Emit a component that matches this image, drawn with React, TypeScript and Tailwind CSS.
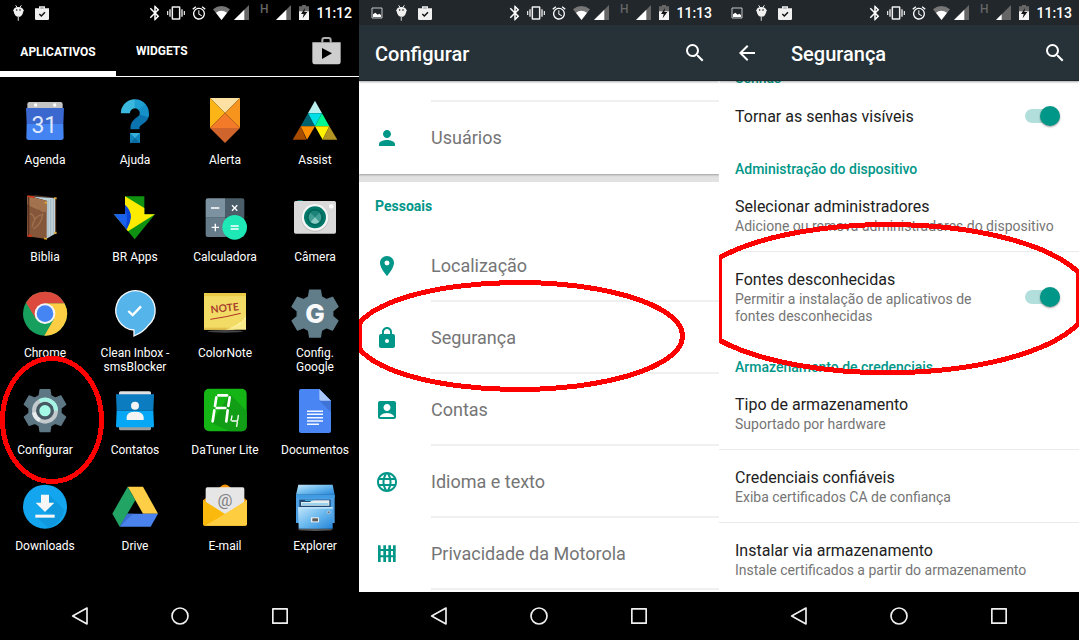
import React from 'react';
import {
  MdAccountBox,
  MdAlarm,
  MdArrowBack,
  MdBluetooth,
  MdLanguage,
  MdLocationOn,
  MdLock,
  MdPerson,
  MdSearch,
} from 'react-icons/md';

/* ---------- Status bar ---------- */

function PictureIcon() {
  return (
    <svg viewBox="0 0 36 36" className="size-3">
      <path d="M3 3h30v30H3z" fill="none" stroke="#c8c8c8" strokeWidth="3" />
      <path d="M6 30V22l7-5 7 6 5-3 5 4v6z" fill="#fff" />
    </svg>
  );
}

function BugIcon() {
  return (
    <svg viewBox="0 0 33 48" className="h-4 w-[11px]" fill="#f0f0f0">
      <path d="M8 1l5 7M25 1l-5 7" stroke="#f0f0f0" strokeWidth="3" />
      <path d="M1 16Q4 6 16 6T32 16L29 26Q26 35 16 36Q7 35 4 26Z" />
      <path d="M16 34v13" stroke="#a8a8a8" strokeWidth="4" />
      <circle cx="11" cy="15" r="2.4" fill="#111" />
      <circle cx="21" cy="15" r="2.4" fill="#111" />
    </svg>
  );
}

function BagIcon() {
  return (
    <svg viewBox="0 0 42 42" className="size-[14px]">
      <path d="M14 8V3h14v5" fill="none" stroke="#f0f0f0" strokeWidth="4" />
      <path d="M0 7h42v31q0 4-4 4H4q-4 0-4-4z" fill="#f0f0f0" />
      <path d="M13 24l6 6 11-11" fill="none" stroke="#111" strokeWidth="4.5" />
    </svg>
  );
}

function VibrateIcon() {
  return (
    <svg viewBox="0 0 54 42" className="h-[14px] w-[18px]" fill="none" stroke="#f0f0f0">
      <rect x="16" y="3" width="22" height="36" rx="1" strokeWidth="4.5" />
      <path d="M9 10v22M45 10v22" strokeWidth="4" />
      <path d="M2 15v12M52 15v12" strokeWidth="3.5" />
    </svg>
  );
}

function WifiIcon() {
  return (
    <svg viewBox="0 0 51 42" className="h-[14px] w-[17px]">
      <path d="M0 10Q25-10 51 10L25.500 42Z" fill="#777" />
      <path d="M9 20Q25 8 42 20L25.500 42Z" fill="#fff" />
    </svg>
  );
}

function SignalIcon({ fill }: { fill: number }) {
  return (
    <svg viewBox="0 0 45 45" className="size-[15px]">
      <path d="M45 0V45H0Z" fill="#666" />
      <path d={`M${fill} ${45 - fill}V45H0Z`} fill="#fff" />
    </svg>
  );
}

function BatteryIcon() {
  return (
    <svg viewBox="0 0 30 45" className="h-[15px] w-[10px]">
      <path d="M9 0h12v4h9v18H0V4h9z" fill="#666" />
      <path d="M0 19h30v26H0z" fill="#f4f4f4" />
      <path d="M18 9L6 27h8l-3 13 14-19h-9z" fill="#111" />
    </svg>
  );
}

function StatusBar({ time, picture, second, className }: { time: string; picture?: boolean; second: number; className: string }) {
  return (
    <div className={`flex h-[25px] shrink-0 items-center pr-[7px] pl-[6px] text-white ${className}`}>
      {picture && (
        <span className="flex w-6 justify-center">
          <PictureIcon />
        </span>
      )}
      <span className="flex w-6 justify-center">
        <BugIcon />
      </span>
      <span className="flex w-6 justify-center">
        <BagIcon />
      </span>
      <span className="ml-auto flex items-center">
        <MdBluetooth className="size-[18px]" />
        <span className="ml-[3px]">
          <VibrateIcon />
        </span>
        <MdAlarm className="ml-1.5 size-4" />
        <span className="ml-1.5">
          <WifiIcon />
        </span>
        <span className="ml-1">
          <SignalIcon fill={31} />
        </span>
        <span className="ml-[11px] pb-2 text-[12px] leading-3 font-medium text-[#666]">H</span>
        <span className="ml-2">
          <SignalIcon fill={second} />
        </span>
        <span className="ml-2">
          <BatteryIcon />
        </span>
        <span className="ml-[7px] text-[14px] leading-4 font-medium">{time}</span>
      </span>
    </div>
  );
}

/* ---------- Navigation bar ---------- */

function NavBar() {
  const shape = 'size-6 overflow-visible';
  return (
    <nav className="flex h-12 shrink-0 items-center justify-center bg-black">
      <button aria-label="Voltar" className="flex h-full w-[100px] items-center justify-center">
        <svg viewBox="0 0 72 72" className={shape} fill="none" stroke="#f0f0f0" strokeWidth="5" strokeLinejoin="round">
          <path d="M14 36L57 12V60Z" />
        </svg>
      </button>
      <button aria-label="Início" className="flex h-full w-[100px] items-center justify-center">
        <svg viewBox="0 0 72 72" className={shape} fill="none" stroke="#f0f0f0" strokeWidth="5">
          <circle cx="36" cy="36" r="24" />
        </svg>
      </button>
      <button aria-label="Recentes" className="flex h-full w-[100px] items-center justify-center">
        <svg viewBox="0 0 72 72" className={shape} fill="none" stroke="#f0f0f0" strokeWidth="5" strokeLinejoin="round">
          <path d="M14.500 14.500h43v43h-43z" />
        </svg>
      </button>
    </nav>
  );
}

/* ---------- Launcher icons ---------- */

function Art({ box, children }: { box: string; children: React.ReactNode }) {
  return (
    <svg viewBox={box} className="size-12 overflow-visible" aria-hidden="true">
      {children}
    </svg>
  );
}

/* Six-toothed gear; each tooth is given as [angle from its axis, radius]. */
const tooth: [number, number][] = [
  [-13, 72],
  [13, 72],
  [21, 54],
  [39, 54],
];

function gear(cx: number, cy: number, scale: number) {
  const points: string[] = [];
  for (let i = 0; i < 6; i++) {
    for (const [angle, radius] of tooth) {
      const a = ((i * 60 + angle - 90) * Math.PI) / 180;
      points.push(`${(cx + radius * scale * Math.cos(a)).toFixed(1)},${(cy + radius * scale * Math.sin(a)).toFixed(1)}`);
    }
  }
  return points.join(' ');
}

const agenda = (
  <Art box="63 51 144 144">
    <path d="M88 66H182Q188 66 188 73V100H82V73Q82 66 88 66Z" fill="#c4c4c4" />
    <circle cx="107" cy="75" r="5" fill="#fff" />
    <circle cx="164" cy="75" r="5" fill="#fff" />
    <path d="M78 84H192L190 132H80Z" fill="#3b68cf" />
    <path d="M80 132H190L191 174Q190 180 184 180H86Q79 180 79 174Z" fill="#4383f2" />
    <text x="133" y="158" textAnchor="middle" fontFamily="Roboto, sans-serif" fontWeight="400" fontSize="69" fill="#dfe8fa">31</text>
  </Art>
);

const ajuda = (
  <Art box="333 51 144 144">
    <g fill="none" strokeWidth="27">
      <path d="M405 148V142Q405 131 419 122Q434 114 434 99" stroke="#0b73ad" />
      <path d="M376 100A29 29 0 0 1 405 71" stroke="#3bb8de" />
      <path d="M404 71A29 29 0 0 1 427 82" stroke="#1ea0d3" />
      <path d="M426 81A29 29 0 0 1 432 108" stroke="#1590c9" />
    </g>
    <path d="M390 159H420V189H390Z" fill="#0f83ba" />
    <path d="M390 159H420L405 174Z" fill="#34aedb" />
    <path d="M390 189H420L405 174Z" fill="#0a6b9f" />
  </Art>
);

const alerta = (
  <Art box="603 51 144 144">
    <path d="M630 54H720L675 99Z" fill="#fde1a2" />
    <path d="M630 54L675 99L630 144Z" fill="#fcb517" />
    <path d="M720 54L675 99L720 144Z" fill="#f7941e" />
    <path d="M630 144L675 99L720 144Z" fill="#f37a28" />
    <path d="M630 144H720L675 189Z" fill="#cf642c" />
  </Art>
);

const assist = (
  <Art box="873 51 144 144">
    <path d="M945 62L924 100H966Z" fill="#b9efef" />
    <path d="M924 100L902 139H945Z" fill="#00626f" />
    <path d="M924 100H966L945 139Z" fill="#00dfe6" />
    <path d="M966 100L945 139H988Z" fill="#00f892" />
    <path d="M902 139L878 179H919Z" fill="#a64b00" />
    <path d="M902 139H945L921 179Z" fill="#ff8f00" />
    <path d="M945 139H988L968 179Z" fill="#fff200" />
    <path d="M988 139L968 179H1012Z" fill="#b39524" />
  </Art>
);

const biblia = (
  <Art box="63 341 144 144">
    <path d="M82 347L108 345L169 352L138 360Z" fill="#4a3a30" />
    <path d="M98 349L166 354L140 362Z" fill="#bcd3dc" />
    <path d="M138 360L168 353V459L138 476Z" fill="#c2d3d9" />
    <path d="M144 360V471M152 358V467M160 356V462" stroke="#93a9b2" strokeWidth="2" />
    <path d="M167 353V459" stroke="#5f3a1d" strokeWidth="3" />
    <path d="M82 347L140 361V476L81 468Z" fill="#84563a" />
    <path d="M82 347L140 361V395Q108 390 82 372Z" fill="#a3734e" />
    <path d="M92 368Q112 362 118 380T134 392M96 440Q104 405 128 402Q124 432 100 446M88 400Q100 400 104 416" fill="none" stroke="#a0714f" strokeWidth="4" />
    <path d="M86 348V468" stroke="#5c3320" strokeWidth="4" />
    <path d="M82 347l22 4" stroke="#d2361c" strokeWidth="5" />
    <path d="M82 467h14M90 461v9" stroke="#d2361c" strokeWidth="4" />
    <path d="M132 474l9 2M134 366l7 2M162 353l8 1M163 459l7-2" stroke="#e0a92a" strokeWidth="5" />
  </Art>
);

const brApps = (
  <Art box="333 341 144 144">
    <path d="M375 348H433V402H465L404 477L342 402H375Z" fill="#0f9212" />
    <path d="M375 348L433 383V402H465L384 453L342 402H375Z" fill="#fdec00" />
    <path d="M375 373Q393 388 393 411Q391 430 380 448L342 402H375Z" fill="#0a47d8" />
    <path d="M375 390Q386 410 377 440L342 402H375Z" fill="#1a62ea" />
  </Art>
);

const calculadora = (
  <Art box="603 341 144 144">
    <path d="M623 354H675V412H617V360Q617 354 623 354Z" fill="#7c92a0" />
    <path d="M675 354H727Q733 354 733 360V412H675Z" fill="#4b5d68" />
    <path d="M617 412H675V470H623Q617 470 617 464Z" fill="#667c8a" />
    <path d="M675 412H733V464Q733 470 727 470H675Z" fill="#51646f" />
    <path d="M633 383H658M635 441H657M646 430V453M696 375L712 391M712 375L696 391" stroke="#fff" strokeWidth="4" />
    <circle cx="704" cy="441" r="37" fill="#1fe8b7" />
    <path d="M692 437H716M692 446H716" stroke="#fff" strokeWidth="4" />
  </Art>
);

const camera = (
  <Art box="873 341 144 144">
    <path d="M893 360H908V366H893Z" fill="#009688" />
    <rect x="882" y="362" width="126" height="98" rx="5" fill="#d9d9d9" />
    <circle cx="945" cy="413" r="41" fill="#bdbdbd" />
    <circle cx="945" cy="411" r="40" fill="#f6f6f6" />
    <circle cx="945" cy="411" r="33" fill="#00796b" />
    <circle cx="945" cy="411" r="25" fill="#00695c" />
    <circle cx="945" cy="411" r="19" fill="#3f9d94" />
    <path d="M932 397L945 411L958 397A19 19 0 0 0 932 397Z" fill="#1d8277" />
    <path d="M932 425L945 411L958 425A19 19 0 0 1 932 425Z" fill="#8ecdc6" />
    <circle cx="994" cy="378" r="7" fill="#fafafa" />
  </Art>
);

const chrome = (
  <Art box="63 31 144 144">
    <circle cx="135" cy="102" r="66" fill="#17a05d" />
    <path d="M135 71H193.500A66 66 0 0 1 133 168L162 118Z" fill="#fdce44" />
    <path d="M78 69A66 66 0 0 1 193.500 71H135L108 118Z" fill="#db4a3c" />
    <circle cx="135" cy="102" r="31" fill="#f4f4f4" />
    <circle cx="135" cy="102" r="25" fill="#4484f3" />
  </Art>
);

const cleanInbox = (
  <Art box="333 31 144 144">
    <path d="M402 151A59 59 0 1 1 447 135Q430 158 402 169Z" fill="#55b5ea" stroke="#f4f8fb" strokeWidth="4" />
    <path d="M385 94L398 106L423 80" fill="none" stroke="#fff" strokeWidth="7" />
  </Art>
);

const colorNote = (
  <Art box="603 31 144 144">
    <ellipse cx="676" cy="155" rx="54" ry="4" fill="#444" />
    <path d="M612 40H738V130Q724 150 690 150H612Z" fill="#f3dc66" />
    <path d="M612 40H738V50H612Z" fill="#e9cb48" />
    <path d="M612 144H700V150H612Z" fill="#e2c04a" />
    <path d="M738 106V150H676Q726 140 738 106Z" fill="#f8e98b" />
    <path d="M738 106Q734 138 676 150Q720 134 716 130Q732 128 738 106Z" fill="#fff5b0" />
    <text x="674" y="96" textAnchor="middle" transform="rotate(-6 676 84)" fontFamily="Lato, sans-serif" fontWeight="700" fontSize="31" fill="#a8402c">NOTE</text>
    <path d="M631 119Q680 112 722 101" fill="none" stroke="#b23324" strokeWidth="3" />
  </Art>
);

const configGoogle = (
  <Art box="873 31 144 144">
    <polygon points={gear(945, 102, 1)} fill="#617d8a" stroke="#617d8a" strokeWidth="4" strokeLinejoin="round" />
    <text x="945" y="130" textAnchor="middle" fontFamily="Inter, sans-serif" fontWeight="800" fontSize="78" fill="#fafafa">G</text>
  </Art>
);

const configurar = (
  <Art box="63 320 144 144">
    <polygon points={gear(135, 391, 0.9)} fill="#5d7784" stroke="#5d7784" strokeWidth="4" strokeLinejoin="round" />
    <circle cx="135" cy="391" r="33" fill="#465962" stroke="#c3cacd" strokeWidth="12" />
    <path d="M119 362A33 33 0 0 1 168 391" fill="none" stroke="#a5f5e4" strokeWidth="12" />
    <path d="M102 396A33 33 0 0 0 119 420" fill="none" stroke="#e8ecee" strokeWidth="12" />
    <circle cx="135" cy="391" r="17" fill="#a4fbe6" />
  </Art>
);

const contatos = (
  <Art box="333 320 144 144">
    <rect x="357" y="333" width="96" height="20" rx="5" fill="#e0e0e0" />
    <rect x="357" y="430" width="96" height="20" rx="5" fill="#9e9e9e" />
    <path d="M348 344Q348 339 354 342H456Q462 339 462 344L460 391H350Z" fill="#0c7cc0" />
    <path d="M350 391H460L462 437Q462 442 456 441H354Q348 442 348 437Z" fill="#06a7f5" />
    <circle cx="405" cy="376" r="12" fill="#f4f4f4" />
    <path d="M380 419V411Q380 394 405 394T431 411V419Z" fill="#f4f4f4" />
  </Art>
);

const daTuner = (
  <Art box="603 320 144 144">
    <rect x="612" y="325" width="128" height="128" rx="15" fill="#14b514" />
    <path d="M690 342L740 392V438Q740 453 725 453H690L634 428Z" fill="#119d16" />
    <g stroke="#fff" strokeWidth="8" strokeLinecap="round">
      <line x1="655" y1="345" x2="681" y2="345" />
      <line x1="649" y1="351" x2="645" y2="377" />
      <line x1="689" y1="351" x2="685" y2="377" />
      <line x1="650" y1="383" x2="676" y2="383" />
      <line x1="643" y1="390" x2="638" y2="423" />
      <line x1="683" y1="390" x2="679" y2="423" />
    </g>
    <g stroke="#fff" strokeWidth="4" strokeLinecap="round">
      <line x1="696" y1="407" x2="693" y2="420" />
      <line x1="715" y1="405" x2="713" y2="420" />
      <line x1="696" y1="422" x2="711" y2="422" />
      <line x1="712" y1="425" x2="710" y2="438" />
    </g>
  </Art>
);

const documentos = (
  <Art box="873 320 144 144">
    <path d="M903 326H958L993 361V452Q993 458 987 458H903Q897 458 897 452V332Q897 326 903 326Z" fill="#4986f4" />
    <path d="M958 361H993V396Z" fill="#3f74d6" />
    <path d="M958 326L993 361H963Q958 361 958 356Z" fill="#a9c6fa" />
    <path d="M921 393H969M921 402H969M921 412H969M921 422H969M921 432H957" stroke="#f2f6fe" strokeWidth="4.500" />
  </Art>
);

const downloads = (
  <Art box="63 40 144 144">
    <circle cx="135" cy="111" r="66" fill="#13a6ee" />
    <path d="M147 75L193 120Q184 160 146 176L108 141L164 136L135 127Z" fill="#0f98dd" />
    <path d="M123 75H147V99H163L135 127L107 99H123Z" fill="#f6f6f6" />
    <path d="M106 135H164V144H106Z" fill="#f6f6f6" />
  </Art>
);

const drive = (
  <Art box="333 40 144 144">
    <path d="M383 51H429L474 132H429Z" fill="#fecf46" />
    <path d="M383 51L406 92L359 171L337 132Z" fill="#21a464" />
    <path d="M382 132H474L452 171H359Z" fill="#4a83ee" />
    <path d="M382 132H400L359 171Z" fill="#3c6fd6" />
  </Art>
);

const email = (
  <Art box="603 40 144 144">
    <path d="M609 92L668 46Q675 43 682 46L741 92V120H609Z" fill="#f59100" />
    <rect x="617" y="53" width="116" height="90" rx="5" fill="#e6e6e6" />
    <text x="675" y="109" textAnchor="middle" fontFamily="Roboto, sans-serif" fontSize="50" fill="#808080">@</text>
    <path d="M609 92L675 133L741 92V162Q741 168 735 168H615Q609 168 609 162Z" fill="#fdc524" />
    <path d="M609 92L675 133L615 168Q609 168 609 162Z" fill="#fbb90d" />
    <path d="M675 133L741 92V162Q741 168 735 168H615Z" fill="#ffce40" />
  </Art>
);

const explorer = (
  <Art box="873 40 144 144">
    <defs>
      <linearGradient id="cabinet" x1="0" y1="0" x2="1" y2="1">
        <stop offset="0" stopColor="#c4e7fb" />
        <stop offset="0.5" stopColor="#6bb9ee" />
        <stop offset="1" stopColor="#2584d8" />
      </linearGradient>
    </defs>
    <ellipse cx="946" cy="180" rx="52" ry="4" fill="#555" />
    <path d="M895 45H998L1004 75H888Z" fill="url(#cabinet)" />
    <path d="M888 75H1004V160H888Z" fill="#4b9fe2" />
    <path d="M888 75H1004V84H888Z" fill="#3f9be4" />
    <path d="M898 90H992V112H898Z" fill="#1f4a78" />
    <path d="M903 97H930L936 92H988V108H903Z" fill="#e4edf2" />
    <path d="M915 92H940M905 103H985" stroke="#4cbce8" strokeWidth="3" />
    <path d="M894 112H998V177H896Z" fill="url(#cabinet)" />
    <path d="M894 112H998V117H894Z" fill="#b9e0f8" />
    <rect x="933" y="143" width="24" height="15" fill="#f0f0f0" />
    <rect x="937" y="146" width="17" height="9" fill="#5d5d5d" />
    <circle cx="986" cy="128" r="4" fill="#5d7484" stroke="#e0e0e0" strokeWidth="2" />
  </Art>
);

const apps: { lines: string[]; art: React.ReactNode }[] = [
  { lines: ['Agenda'], art: agenda },
  { lines: ['Ajuda'], art: ajuda },
  { lines: ['Alerta'], art: alerta },
  { lines: ['Assist'], art: assist },
  { lines: ['Biblia'], art: biblia },
  { lines: ['BR Apps'], art: brApps },
  { lines: ['Calculadora'], art: calculadora },
  { lines: ['Câmera'], art: camera },
  { lines: ['Chrome'], art: chrome },
  { lines: ['Clean Inbox -', 'smsBlocker'], art: cleanInbox },
  { lines: ['ColorNote'], art: colorNote },
  { lines: ['Config.', 'Google'], art: configGoogle },
  { lines: ['Configurar'], art: configurar },
  { lines: ['Contatos'], art: contatos },
  { lines: ['DaTuner Lite'], art: daTuner },
  { lines: ['Documentos'], art: documentos },
  { lines: ['Downloads'], art: downloads },
  { lines: ['Drive'], art: drive },
  { lines: ['E-mail'], art: email },
  { lines: ['Explorer'], art: explorer },
];

/* ---------- Red highlight rings ---------- */

function Ring({ d }: { d: string }) {
  return (
    <svg className="pointer-events-none absolute inset-0 size-full" fill="none" stroke="#ff0000" strokeWidth="5" shapeRendering="crispEdges" aria-hidden="true">
      <path d={d} />
    </svg>
  );
}

/* ---------- Screens ---------- */

function Launcher() {
  return (
    <section className="relative flex min-w-0 flex-col bg-black text-white">
      <StatusBar time="11:12" second={31} className="bg-black" />
      <div role="tablist" className="flex h-[52px] shrink-0 border-b border-white text-[12px] font-bold">
        <button role="tab" aria-selected="true" className="-mb-px w-[116px] border-b-6 border-white pt-2">
          APLICATIVOS
        </button>
        <button role="tab" aria-selected="false" className="px-5 pt-px">
          WIDGETS
        </button>
        <button aria-label="Play Store" className="mr-[18px] ml-auto">
          <svg viewBox="0 0 87 84" className="h-7 w-[29px]">
            <path d="M31 16V9Q31 3 37 3H50Q56 3 56 9V16" fill="none" stroke="#b0b0b0" strokeWidth="6" />
            <path d="M1 16H86V75Q86 82 79 82H8Q1 82 1 75Z" fill="#cecece" />
            <path d="M30 33L60 49L30 66Z" fill="#000" />
          </svg>
        </button>
      </div>
      <ul className="-mr-px grid flex-1 grid-cols-4 grid-rows-5 pt-[11px] pb-[21px]">
        {apps.map(({ lines, art }) => (
          <li key={lines[0]} className="min-h-0">
            <button className="flex w-full flex-col items-center gap-2 pt-[9px] text-[12px] leading-[14px]">
              {art}
              <span>
                {lines.map((line) => (
                  <span key={line} className="block">
                    {line}
                  </span>
                ))}
              </span>
            </button>
          </li>
        ))}
      </ul>
      <NavBar />
      <Ring d="M2.500 420A49.500 61.500 0 1 1 101.500 420A49.500 61.500 0 1 1 2.500 420Z" />
    </section>
  );
}

function FenceIcon() {
  return (
    <svg viewBox="0 0 72 72" className="size-6" stroke="#009688" fill="none" aria-hidden="true">
      <path d="M13 10V60M29 10V60M44 10V60M58 10V60" strokeWidth="8" />
      <path d="M10 24H61M10 43H61" strokeWidth="6" />
    </svg>
  );
}

function AppBar({ title, back }: { title: string; back?: boolean }) {
  return (
    <header className="relative flex h-14 shrink-0 items-center border-b border-[#1c262b] bg-[#263238] pr-3 pl-4 text-white shadow-[0_1px_2px_rgba(0,0,0,0.35)]">
      {back && (
        <button aria-label="Voltar" className="mr-8">
          <MdArrowBack className="size-6" />
        </button>
      )}
      <h1 className="pt-0.5 text-[20px] leading-6 font-medium">{title}</h1>
      <button aria-label="Pesquisar" className="ml-auto">
        <MdSearch className="size-6" />
      </button>
    </header>
  );
}

function SettingsRow({ icon, label, last }: { icon: React.ReactNode; label: string; last?: boolean }) {
  return (
    <li>
      <a href="#" className="flex h-[72px] items-center gap-8 pl-4 text-[18px] text-[#757575]">
        <span className="text-[#009688]">{icon}</span>
        <span className={`flex h-full flex-1 items-center border-b-2 ${last ? 'border-transparent' : 'border-[#f0f0f0]'}`}>{label}</span>
      </a>
    </li>
  );
}

function Settings() {
  return (
    <section className="relative flex min-w-0 flex-col overflow-hidden bg-white">
      <StatusBar time="11:13" picture second={31} className="bg-[#21272b]" />
      <AppBar title="Configurar" />
      <div className="min-h-0 flex-1 overflow-hidden bg-[#e2e2e2]">
        <ul className="bg-white pt-[19px] shadow-[0_1px_2px_rgba(0,0,0,0.3)]">
          <li className="ml-[72px] border-b-2 border-[#f0f0f0]" />
          <SettingsRow icon={<MdPerson className="size-6" />} label="Usuários" last />
        </ul>
        <div className="mt-2 bg-white">
          <h2 className="flex h-12 items-center pl-4 text-[14px] font-bold text-[#009688]">Pessoais</h2>
          <ul>
            <SettingsRow icon={<MdLocationOn className="size-6" />} label="Localização" />
            <SettingsRow icon={<MdLock className="size-6" />} label="Segurança" />
            <SettingsRow icon={<MdAccountBox className="size-6" />} label="Contas" />
            <SettingsRow icon={<MdLanguage className="size-6" />} label="Idioma e texto" />
            <SettingsRow icon={<FenceIcon />} label="Privacidade da Motorola" />
          </ul>
          <div className="h-12" />
        </div>
      </div>
      <NavBar />
      <Ring d="M0 324A163.800 53.500 0 1 1 0 348Z" />
    </section>
  );
}

function Toggle({ id }: { id: string }) {
  return (
    <input
      id={id}
      type="checkbox"
      role="switch"
      defaultChecked
      className="relative h-[14px] w-[35px] shrink-0 appearance-none rounded-full bg-[#b2dfdb] before:absolute before:-top-[3px] before:right-0 before:size-5 before:rounded-full before:bg-[#009688] before:shadow-[0_1px_2px_rgba(0,0,0,0.4)]"
    />
  );
}

function Heading({ children }: { children: React.ReactNode }) {
  return <h2 className="flex h-[35px] items-end pb-[2px] pl-4 text-[14px] leading-4 font-medium text-[#009688]">{children}</h2>;
}

function Item({ title, text, toggle, last }: { title: string; text?: string; toggle?: string; last?: boolean }) {
  const body = (
    <>
      <span className="block text-[16px] leading-[21px] text-[#212121]">{title}</span>
      {text && <span className="mt-px block text-[14px] leading-[17px] text-[#757575]">{text}</span>}
    </>
  );
  return (
    <li className={`flex min-h-14 items-center gap-8 border-b pr-[19px] pl-4 ${text ? 'pt-[17px] pb-4' : 'pt-px'} ${last ? 'border-transparent' : 'border-[#ebebeb]'}`}>
      {toggle ? (
        <>
          <label htmlFor={toggle} className="flex-1">
            {body}
          </label>
          <Toggle id={toggle} />
        </>
      ) : (
        <a href="#" className="flex-1">
          {body}
        </a>
      )}
    </li>
  );
}

function Security() {
  return (
    <section className="relative flex min-w-0 flex-col overflow-hidden bg-white">
      <StatusBar time="11:13" picture second={17} className="bg-[#21272b]" />
      <AppBar title="Segurança" back />
      <div className="min-h-0 flex-1 overflow-hidden">
        <div className="-mt-7">
          <Heading>Senhas</Heading>
          <ul>
            <Item title="Tornar as senhas visíveis" toggle="visible-passwords" last />
          </ul>
          <Heading>Administração do dispositivo</Heading>
          <ul>
            <Item title="Selecionar administradores" text="Adicione ou remova administradores do dispositivo" />
            <Item title="Fontes desconhecidas" text="Permitir a instalação de aplicativos de fontes desconhecidas" toggle="unknown-sources" last />
          </ul>
          <Heading>Armazenamento de credenciais</Heading>
          <ul>
            <Item title="Tipo de armazenamento" text="Suportado por hardware" />
            <Item title="Credenciais confiáveis" text="Exiba certificados CA de confiança" />
            <Item title="Instalar via armazenamento" text="Instale certificados a partir do armazenamento" last />
          </ul>
        </div>
      </div>
      <NavBar />
      <Ring d="M0 258A202 73 0 0 1 359 272V324A202 73 0 0 1 0 340Z" />
    </section>
  );
}

export default function App() {
  return (
    <main className="grid h-screen grid-cols-[359fr_360fr_360fr] grid-rows-1 bg-white pr-px font-[Roboto,sans-serif]">
      <Launcher />
      <Settings />
      <Security />
    </main>
  );
}
